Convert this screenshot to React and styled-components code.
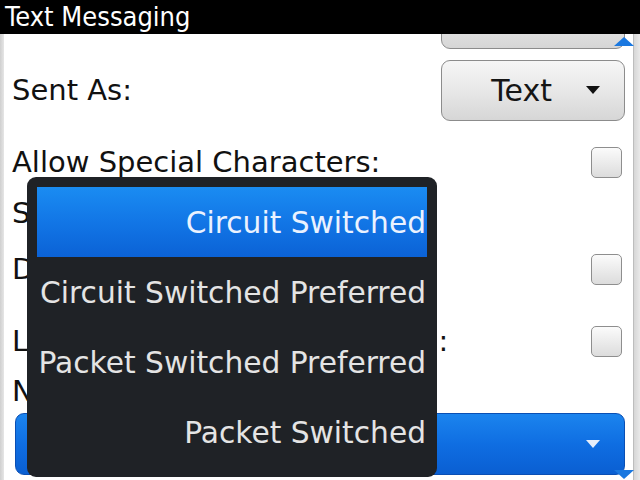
import React from 'react';
import styled, { createGlobalStyle } from 'styled-components';

const GlobalStyle = createGlobalStyle`
  html, body {
    margin: 0;
    padding: 0;
    background: #ffffff;
  }
  body {
    font-family: "DejaVu Sans", "Liberation Sans", sans-serif;
  }
`;

const Screen = styled.div`
  position: relative;
  width: 640px;
  height: 480px;
  overflow: hidden;
  display: flex;
  flex-direction: column;
  background: #ffffff;
`;

const TitleBar = styled.div`
  height: 34px;
  flex: none;
  background: #000000;
  color: #ffffff;
  font-family: "DejaVu Sans Condensed", "DejaVu Sans", sans-serif;
  font-stretch: semi-condensed;
  font-size: 27px;
  line-height: 34px;
  padding-left: 5px;
  position: relative;
  z-index: 2;
`;

const Body = styled.div`
  flex: 1;
  display: flex;
  min-height: 0;
`;

const LeftEdge = styled.div`
  width: 4px;
  flex: none;
  background: linear-gradient(to right, #cfcfcf, #e6e6e6);
`;

const Content = styled.div`
  flex: 1;
  padding: 0 8px 0 8px;
  display: flex;
  flex-direction: column;
`;

const ScrollTrack = styled.div`
  width: 7px;
  flex: none;
  background: linear-gradient(to right, #d6d6d6, #ececec);
  border-left: 1px solid #bdbdbd;
`;

const List = styled.div`
  margin-top: -52px;
  display: flex;
  flex-direction: column;
`;

const Row = styled.div`
  height: ${p => p.$h}px;
  flex: none;
  display: flex;
  align-items: center;
  justify-content: space-between;
`;

const Label = styled.span`
  font-size: 29px;
  color: #111111;
  white-space: nowrap;
`;

const ChoiceButton = styled.div`
  box-sizing: border-box;
  width: 184px;
  height: 61px;
  border: 1px solid #8c8c8c;
  border-radius: 9px;
  background: linear-gradient(to bottom, #f6f6f6 0%, #e6e6e6 55%, #d6d6d6 100%);
  display: flex;
  align-items: center;
  justify-content: flex-end;
  padding-right: 24px;
  gap: 34px;
  font-size: 30px;
  color: #151515;
`;

const Caret = styled.span`
  width: 0;
  height: 0;
  border-left: 7px solid transparent;
  border-right: 7px solid transparent;
  border-top: 8px solid ${p => p.$light ? '#e6eefa' : '#111111'};
`;

const CheckBox = styled.div`
  box-sizing: border-box;
  width: 31px;
  height: 31px;
  margin-right: 3px;
  border: 1px solid #8e8e8e;
  border-radius: 5px;
  background: linear-gradient(to bottom, #fbfbfb, #dcdcdc);
`;

const BlueButton = styled.div`
  box-sizing: border-box;
  margin-top: 3px;
  width: 610px;
  margin-left: 3px;
  height: 62px;
  border: 1px solid #0a4fb4;
  border-radius: 9px;
  background: linear-gradient(to bottom, #1b84ee 0%, #0f6ee2 50%, #0a5fd2 100%);
  display: flex;
  align-items: center;
  justify-content: flex-end;
  padding-right: 24px;
`;

const ScrollArrow = styled.span`
  position: absolute;
  right: 6px;
  width: 0;
  height: 0;
  border-left: 10px solid transparent;
  border-right: 10px solid transparent;
  z-index: 3;
  ${p => p.$up
    ? 'top: 37px; border-bottom: 9px solid #1a78e0;'
    : 'bottom: 1px; border-top: 9px solid #1a78e0;'}
`;

const Menu = styled.div`
  position: absolute;
  left: 27px;
  top: 177px;
  width: 410px;
  box-sizing: border-box;
  padding: 10px;
  background: #1f2226;
  border-radius: 9px;
  z-index: 4;
  display: flex;
  flex-direction: column;
`;

const MenuItem = styled.div`
  height: 70px;
  display: flex;
  align-items: center;
  justify-content: flex-end;
  padding-right: 1px;
  font-size: 29.7px;
  white-space: nowrap;
  color: ${p => p.$selected ? '#eaf2ff' : '#e4e4e4'};
  background: ${p => p.$selected
    ? 'linear-gradient(to bottom, #1a8cf2 0%, #1276e6 50%, #0b62d6 100%)'
    : 'transparent'};
`;

const options = [
  'Circuit Switched',
  'Circuit Switched Preferred',
  'Packet Switched Preferred',
  'Packet Switched',
];

export default function App() {
  return (
    <>
      <GlobalStyle />
      <Screen>
        <TitleBar>Text Messaging</TitleBar>
        <Body>
          <LeftEdge />
          <Content>
            <List>
              <Row $h={72}>
                <Label>Delivery Reports:</Label>
                <ChoiceButton>Off<Caret /></ChoiceButton>
              </Row>
              <Row $h={72}>
                <Label>Sent As:</Label>
                <ChoiceButton>Text<Caret /></ChoiceButton>
              </Row>
              <Row $h={72}>
                <Label>Allow Special Characters:</Label>
                <CheckBox />
              </Row>
              <Row $h={30}>
                <Label>SMS Center:</Label>
              </Row>
              <Row $h={82}>
                <Label>Disable Auto Text:</Label>
                <CheckBox />
              </Row>
              <Row $h={62}>
                <Label>Leave Messages On SIM Card:</Label>
                <CheckBox />
              </Row>
              <Row $h={38}>
                <Label>Network to Use:</Label>
              </Row>
              <BlueButton><Caret $light /></BlueButton>
            </List>
          </Content>
          <ScrollTrack />
        </Body>
        <ScrollArrow $up />
        <ScrollArrow />
        <Menu>
          {options.map((o, i) => (
            <MenuItem key={o} $selected={i === 0}>{o}</MenuItem>
          ))}
        </Menu>
      </Screen>
    </>
  );
}
